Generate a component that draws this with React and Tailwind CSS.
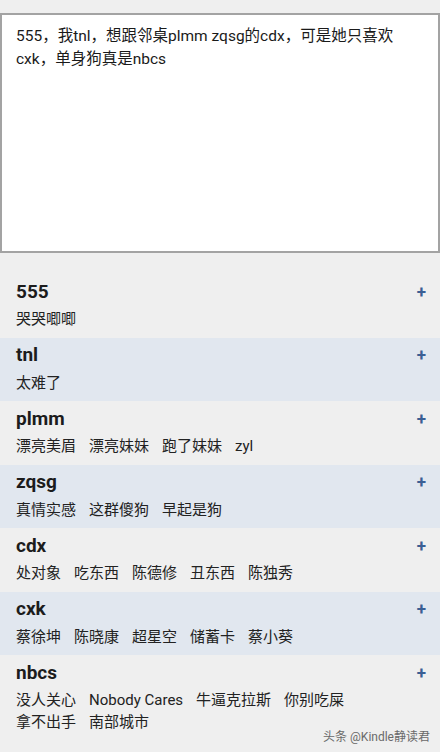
const FONT = { fontFamily: '"Roboto", "Noto Sans CJK SC", sans-serif' };

const rows = [
  { word: '555', tags: ['哭哭唧唧'] },
  { word: 'tnl', tags: ['太难了'] },
  { word: 'plmm', tags: ['漂亮美眉', '漂亮妹妹', '跑了妹妹', 'zyl'] },
  { word: 'zqsg', tags: ['真情实感', '这群傻狗', '早起是狗'] },
  { word: 'cdx', tags: ['处对象', '吃东西', '陈德修', '丑东西', '陈独秀'] },
  { word: 'cxk', tags: ['蔡徐坤', '陈晓康', '超星空', '储蓄卡', '蔡小葵'] },
  { word: 'nbcs', tags: ['没人关心', 'Nobody Cares', '牛逼克拉斯', '你别吃屎', '拿不出手', '南部城市'] },
];

function Row({ word, tags, shaded }) {
  return (
    <div className={`px-4 pt-[6px] pb-[7.5px] ${shaded ? 'bg-[#e1e7ef]' : ''}`}>
      <div className="flex items-center justify-between h-[24px]">
        <span className="text-[19px] font-bold text-[#1c1c1c]">{word}</span>
        <span className="text-[17px] font-bold text-[#3b5f94] mr-[-2px] leading-none">+</span>
      </div>
      <div className="flex flex-wrap gap-x-[13px] mt-[4px] pr-[24px] text-[15px] leading-[22px] text-[#222]">
        {tags.map((t) => (
          <span key={t}>{t}</span>
        ))}
      </div>
    </div>
  );
}

export default function App() {
  return (
    <div className="relative w-[440px] h-[752px] bg-[#efefef] overflow-hidden flex flex-col" style={FONT}>
      <div className="shrink-0 mt-[13px] h-[240px] bg-white border-2 border-[#a3a3a3] px-[14px] pt-[10px]">
        <p className="text-[15.5px] leading-[23px] text-[#1a1a1a]">
          555，我tnl，想跟邻桌plmm zqsg的cdx，可是她只喜欢
          <br />
          cxk，单身狗真是nbcs
        </p>
      </div>
      <div className="shrink-0 mt-[21px] flex flex-col">
        {rows.map((r, i) => (
          <Row key={r.word} {...r} shaded={i % 2 === 1} />
        ))}
      </div>
      <div className="absolute right-[10px] bottom-[6px] text-[12px] text-[#6a6a6a]">
        头条 @Kindle静读君
      </div>
    </div>
  );
}
